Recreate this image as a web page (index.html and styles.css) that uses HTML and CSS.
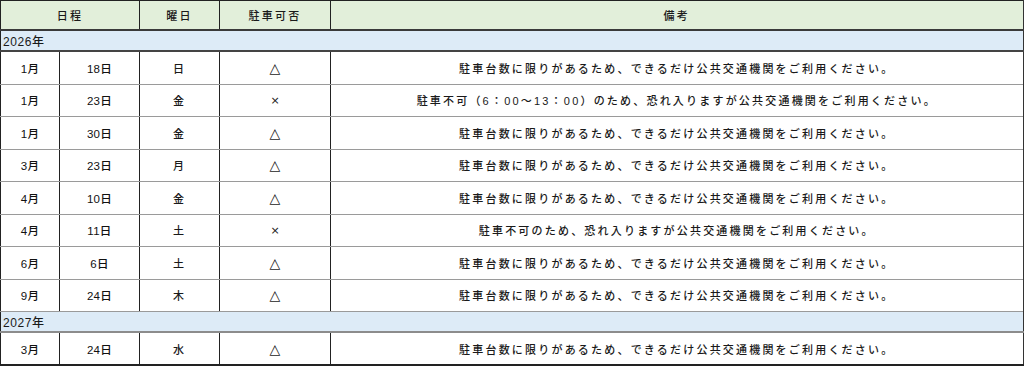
FILE: index.html
```html
<!DOCTYPE html>
<html lang="ja">
<head>
<meta charset="utf-8">
<link rel="stylesheet" href="styles.css">
</head>
<body>
<table class="sched">
  <colgroup>
    <col class="c-m"><col class="c-d"><col class="c-w"><col class="c-p"><col class="c-n">
  </colgroup>
  <thead>
    <tr class="head">
      <th colspan="2">日程</th>
      <th>曜日</th>
      <th>駐車可否</th>
      <th class="last">備考</th>
    </tr>
  </thead>
  <tbody>
    <tr class="year"><td colspan="5">2026年</td></tr>
    <tr><td class="num">1月</td><td class="num">18日</td><td>日</td><td class="mark">△</td><td>駐車台数に限りがあるため、できるだけ公共交通機関をご利用ください。</td></tr>
    <tr><td class="num">1月</td><td class="num">23日</td><td>金</td><td class="mark x">×</td><td>駐車不可（6：00～13：00）のため、恐れ入りますが公共交通機関をご利用ください。</td></tr>
    <tr><td class="num">1月</td><td class="num">30日</td><td>金</td><td class="mark">△</td><td>駐車台数に限りがあるため、できるだけ公共交通機関をご利用ください。</td></tr>
    <tr><td class="num">3月</td><td class="num">23日</td><td>月</td><td class="mark">△</td><td>駐車台数に限りがあるため、できるだけ公共交通機関をご利用ください。</td></tr>
    <tr><td class="num">4月</td><td class="num">10日</td><td>金</td><td class="mark">△</td><td>駐車台数に限りがあるため、できるだけ公共交通機関をご利用ください。</td></tr>
    <tr><td class="num">4月</td><td class="num">11日</td><td>土</td><td class="mark x">×</td><td>駐車不可のため、恐れ入りますが公共交通機関をご利用ください。</td></tr>
    <tr><td class="num">6月</td><td class="num">6日</td><td>土</td><td class="mark">△</td><td>駐車台数に限りがあるため、できるだけ公共交通機関をご利用ください。</td></tr>
    <tr><td class="num">9月</td><td class="num">24日</td><td>木</td><td class="mark">△</td><td>駐車台数に限りがあるため、できるだけ公共交通機関をご利用ください。</td></tr>
    <tr class="year"><td colspan="5">2027年</td></tr>
    <tr class="end"><td class="num">3月</td><td class="num">24日</td><td>水</td><td class="mark">△</td><td>駐車台数に限りがあるため、できるだけ公共交通機関をご利用ください。</td></tr>
  </tbody>
</table>
</body>
</html>
```
FILE: styles.css
```css
html, body {
  margin: 0;
  padding: 0;
  background: #ffffff;
}
.sched {
  border-collapse: collapse;
  table-layout: fixed;
  width: 1023px;
  font-family: "Liberation Sans", "Noto Sans CJK JP", sans-serif;
  font-size: 11px;
  font-weight: 500;
  color: #1a1a1a;
  border-left: 1px solid #222;
  border-right: 2px solid #333;
}
.c-m { width: 59px; }
.c-d { width: 80px; }
.c-w { width: 80px; }
.c-p { width: 111px; }
.c-n { width: 693px; }

.sched th, .sched td {
  padding: 0;
  text-align: center;
  letter-spacing: 2.2px;
  white-space: nowrap;
}
.head th {
  height: 28px;
  background: #e2efda;
  font-weight: 500;
  border-top: 1px solid #222;
  border-bottom: 2px solid #3a3a3a;
  border-right: 1px solid #222;
}
.head th.last {
  border-left: 1px solid #8a8f86;
  border-right: 2px solid #333;
}
.sched tbody td {
  height: 31.5px;
  border-right: 1px solid #222;
  border-bottom: 1px solid #9a9a9a;
}
.sched tbody td.num {
  letter-spacing: 0.3px;
  font-size: 11.5px;
  color: #111;
}
.sched tbody td.mark {
  font-family: "DejaVu Sans", sans-serif;
  font-weight: 700;
  font-size: 14px;
  letter-spacing: 0;
}
.sched tbody td.mark.x {
  font-weight: 400;
  font-size: 11px;
}
.sched tbody tr.year td {
  height: 19px;
  background: #ddebf7;
  text-align: left;
  padding-left: 2px;
  letter-spacing: 0.6px;
  font-size: 12px;
  border-bottom: 2px solid #8c8c8c;
  border-right: 2px solid #333;
}
.sched tbody tr.year:first-child td {
  border-bottom: 2px solid #444;
}
.sched tbody tr.end td {
  height: 31px;
  border-bottom: 2px solid #222;
}
```
